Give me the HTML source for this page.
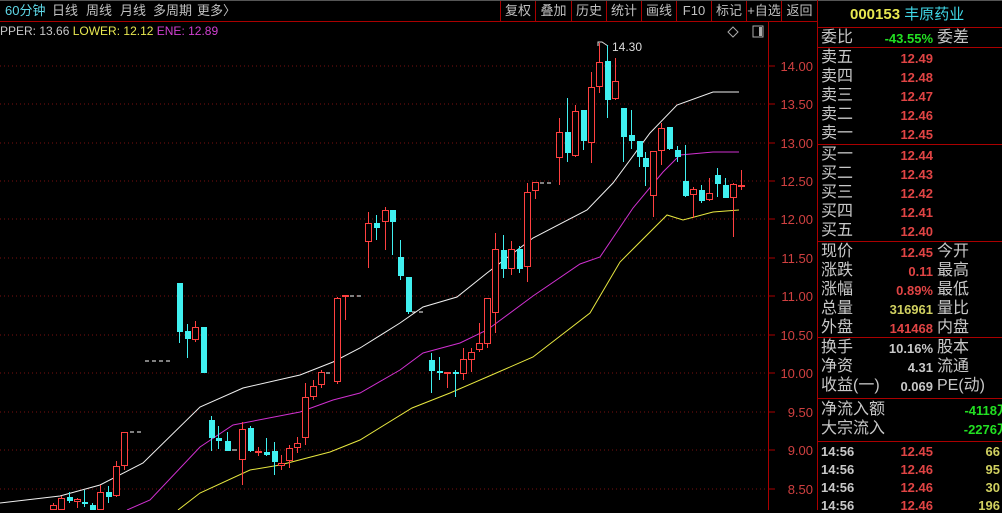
<!DOCTYPE html>
<html><head><meta charset="utf-8"><style>
*{margin:0;padding:0;box-sizing:border-box}
body{width:1002px;height:510px;background:#000;overflow:hidden;position:relative;font-family:"Liberation Sans","WenQuanYi Zen Hei","Noto Sans CJK SC",sans-serif;color:#c8c8c8}
.a{position:absolute;white-space:nowrap;line-height:1}
.tb{font-size:13px;color:#c0c0c0;top:4px}
.btn{position:absolute;top:0;height:21px;border-right:1px solid #a00;font-size:13px;color:#c0c0c0;text-align:center;line-height:21px}
.l{font-size:16px;color:#c8c8c8;left:821px}
.l2{font-size:16px;color:#c8c8c8;left:937px}
.n{font-size:13px;font-weight:bold;text-align:right;width:120px;left:813px}
.r{color:#e04444}.g{color:#22e022}.y{color:#d0d060}.w{color:#c8c8c8}
.hl{position:absolute;left:818px;width:184px;height:1px;background:#a00}
</style></head><body>
<div class="a tb" style="left:5px;color:#5fd8e8">60分钟</div>
<div class="a tb" style="left:52px">日线</div>
<div class="a tb" style="left:86px">周线</div>
<div class="a tb" style="left:120px">月线</div>
<div class="a tb" style="left:153px">多周期</div>
<div class="a tb" style="left:197px">更多〉</div>
<div style="position:absolute;left:500px;top:0;width:1px;height:21px;background:#a00"></div>
<div class="btn" style="left:501px;width:35px">复权</div>
<div class="btn" style="left:536px;width:36px">叠加</div>
<div class="btn" style="left:572px;width:35px">历史</div>
<div class="btn" style="left:607px;width:35px">统计</div>
<div class="btn" style="left:642px;width:35px">画线</div>
<div class="btn" style="left:677px;width:35px">F10</div>
<div class="btn" style="left:712px;width:35px">标记</div>
<div class="btn" style="left:747px;width:35px">+自选</div>
<div class="btn" style="left:782px;width:36px">返回</div>
<div style="position:absolute;left:0;top:21px;width:818px;height:1px;background:#a00"></div>
<div style="position:absolute;left:0;top:0;width:1002px;height:1px;background:#555"></div>
<div class="a" style="left:0;top:25px;font-size:12px"><span class="w">PPER: 13.66 </span><span style="color:#e8e850">LOWER: 12.12 </span><span style="color:#d040d0">ENE: 12.89</span></div>

<svg style="position:absolute;left:0;top:0" width="818" height="510">
<g stroke="#7a1010" stroke-dasharray="1 3">
<line x1="0" y1="66" x2="768" y2="66"/><line x1="0" y1="104" x2="768" y2="104"/><line x1="0" y1="143" x2="768" y2="143"/><line x1="0" y1="181" x2="768" y2="181"/><line x1="0" y1="219" x2="768" y2="219"/><line x1="0" y1="258" x2="768" y2="258"/><line x1="0" y1="296" x2="768" y2="296"/><line x1="0" y1="335" x2="768" y2="335"/><line x1="0" y1="373" x2="768" y2="373"/><line x1="0" y1="412" x2="768" y2="412"/><line x1="0" y1="450" x2="768" y2="450"/><line x1="0" y1="489" x2="768" y2="489"/>
</g>
<line x1="768.5" y1="22" x2="768.5" y2="510" stroke="#a00"/>
<line x1="817.5" y1="0" x2="817.5" y2="510" stroke="#a00"/>
<g stroke="#a00">
<line x1="769" y1="66" x2="775" y2="66"/><line x1="769" y1="104" x2="775" y2="104"/><line x1="769" y1="143" x2="775" y2="143"/><line x1="769" y1="181" x2="775" y2="181"/><line x1="769" y1="219" x2="775" y2="219"/><line x1="769" y1="258" x2="775" y2="258"/><line x1="769" y1="296" x2="775" y2="296"/><line x1="769" y1="335" x2="775" y2="335"/><line x1="769" y1="373" x2="775" y2="373"/><line x1="769" y1="412" x2="775" y2="412"/><line x1="769" y1="450" x2="775" y2="450"/><line x1="769" y1="489" x2="775" y2="489"/>
</g>
<g fill="#d04040" font-size="13" text-anchor="end" font-family="Liberation Sans">
<text x="813" y="71">14.00</text><text x="813" y="109">13.50</text><text x="813" y="148">13.00</text><text x="813" y="186">12.50</text><text x="813" y="224">12.00</text><text x="813" y="263">11.50</text><text x="813" y="301">11.00</text><text x="813" y="340">10.50</text><text x="813" y="378">10.00</text><text x="813" y="417">9.50</text><text x="813" y="455">9.00</text><text x="813" y="494">8.50</text>
</g>
<path d="M733 27l5 5-5 5-5-5z" fill="none" stroke="#aaa"/>
<rect x="753" y="26" width="10" height="11" fill="none" stroke="#aaa"/><rect x="759" y="27" width="3" height="9" fill="#aaa"/>
<polyline fill="none" stroke="#f0f0f0" points="0,503 60,496 100,485 143,463 200,407 243,388 300,375 333,362 360,348 400,323 423,307 457,297 487,273 533,238 587,210 613,183 650,133 677,105 713,92 739,92"/>
<polyline fill="none" stroke="#d030d0" points="127,510 150,500 200,447 233,425 300,412 333,400 360,393 400,370 423,353 460,343 487,330 533,296 580,264 600,257 633,208 663,172 680,155 713,152 739,152"/>
<polyline fill="none" stroke="#e8e840" points="178,510 200,493 250,470 280,465 330,452 360,440 412,408 450,393 487,377 533,357 590,313 620,262 667,215 683,220 713,212 739,210"/>
<g stroke="#fff"><line x1="130" y1="432" x2="142" y2="432" stroke-dasharray="4 3"/><line x1="145" y1="361" x2="173" y2="361" stroke-dasharray="4 3"/><line x1="350" y1="296" x2="362" y2="296" stroke-dasharray="4 3"/><line x1="326" y1="373" x2="330" y2="373"/><line x1="232" y1="450" x2="237" y2="450"/><line x1="412" y1="312" x2="425" y2="312" stroke-dasharray="4 3"/><line x1="540" y1="183" x2="552" y2="183" stroke-dasharray="4 3"/></g>
<text x="612" y="51" fill="#ddd" font-size="12" font-family="Liberation Sans">14.30</text>
<path d="M598 46v-4h4l6 4" fill="none" stroke="#ddd"/>
<g id="c"></g>
</svg>
<script>
var C=[[53,505,510,503,510,1],[61,498,510,496,510,1],[69,497,501,492,503,0],[77,499,502,498,508,1],[84,502,504,490,507,0],[92,505,510,503,510,0],[100,492,510,485,510,1],[108,492,497,486,503,0],[116,466,496,461,497,1],[124,432,466,432,470,1],
[179,283,332,283,343,0],[187,331,339,324,358,0],[195,327,340,321,342,1],[203,327,373,327,373,0],
[211,420,438,416,451,0],[218,438,441,426,449,0],[227,441,451,432,451,0],[242,429,460,422,485,1],[250,428,451,426,452,0],[258,451,453,447,456,1],[266,452,455,438,456,0],[274,451,462,442,475,0],[281,463,466,455,470,1],[289,448,461,445,468,1],[297,443,448,437,453,1],[305,397,438,383,445,1],[313,386,397,380,400,1],[321,372,385,370,388,1],[337,298,382,297,384,1],[345,295,297,295,320,1],
[368,223,242,212,268,1],[376,223,228,215,240,0],[385,210,222,207,250,1],[392,210,222,210,255,0],[400,257,276,240,280,0],[408,277,312,277,314,0],
[431,360,371,353,393,0],[439,371,373,357,380,0],[447,372,374,372,388,1],[455,372,374,370,397,0],[463,359,374,348,380,1],[471,352,360,348,372,1],[479,343,350,323,352,1],[487,298,344,298,348,1],[495,249,313,233,333,1],[503,250,269,235,278,0],[511,249,269,241,275,1],[519,249,269,246,273,0],[527,192,267,183,282,1],[535,182,191,182,199,1],
[559,132,158,118,185,1],[567,132,153,98,162,0],[575,111,156,105,157,1],[583,110,141,110,150,0],[591,87,143,72,163,1],[599,62,87,43,93,1],[607,61,100,45,118,0],[615,81,99,58,100,1],[623,108,137,108,162,0],[631,135,141,110,149,0],[639,141,157,141,167,0],[645,158,167,152,186,0],[653,151,196,151,217,1],[661,128,151,123,165,1],[669,127,149,127,150,0],[677,150,157,146,162,0],[685,181,196,145,197,0],[693,189,195,187,218,1],[701,190,201,185,203,0],[709,193,200,178,201,1],[717,175,184,168,197,0],[725,185,198,178,198,0],[733,184,198,183,237,1],[741,185,187,170,190,1]];
var g=document.getElementById('c'),s='';
C.forEach(function(c){var x=c[0],o=c[1],cl=c[2],h=c[3],l=c[4],col=c[5]?'#ff4040':'#40f0f0';
s+='<line x1="'+(x+.5)+'" y1="'+h+'" x2="'+(x+.5)+'" y2="'+l+'" stroke="'+col+'"/>';
var hh=Math.max(cl-o,1);
if(c[5])s+='<rect x="'+(x-2.5)+'" y="'+(o+.5)+'" width="6" height="'+(hh-1<1?1:hh-1)+'" fill="#000" stroke="'+col+'"/>';
else s+='<rect x="'+(x-2)+'" y="'+o+'" width="6" height="'+hh+'" fill="'+col+'"/>';});
g.innerHTML=s;
</script>

<div class="a" style="left:850px;top:7px;font-size:15px;font-weight:bold;color:#e8e850">000153 <span style="color:#40d8e8;font-weight:normal">丰原药业</span></div>
<div class="hl" style="top:27px"></div>
<div class="a l" style="top:30px">委比</div><div class="a n g" style="top:32px">-43.55%</div><div class="a l2" style="top:30px">委差</div>
<div class="hl" style="top:47px"></div>
<div class="a l" style="top:50px">卖五</div><div class="a n r" style="top:52px">12.49</div>
<div class="a l" style="top:69px">卖四</div><div class="a n r" style="top:71px">12.48</div>
<div class="a l" style="top:88px">卖三</div><div class="a n r" style="top:90px">12.47</div>
<div class="a l" style="top:107px">卖二</div><div class="a n r" style="top:109px">12.46</div>
<div class="a l" style="top:126px">卖一</div><div class="a n r" style="top:128px">12.45</div>
<div class="hl" style="top:144px"></div>
<div class="a l" style="top:147px">买一</div><div class="a n r" style="top:149px">12.44</div>
<div class="a l" style="top:166px">买二</div><div class="a n r" style="top:168px">12.43</div>
<div class="a l" style="top:185px">买三</div><div class="a n r" style="top:187px">12.42</div>
<div class="a l" style="top:204px">买四</div><div class="a n r" style="top:206px">12.41</div>
<div class="a l" style="top:223px">买五</div><div class="a n r" style="top:225px">12.40</div>
<div class="hl" style="top:241px"></div>
<div class="a l" style="top:244px">现价</div><div class="a n r" style="top:246px">12.45</div><div class="a l2" style="top:244px">今开</div>
<div class="a l" style="top:263px">涨跌</div><div class="a n r" style="top:265px">0.11</div><div class="a l2" style="top:263px">最高</div>
<div class="a l" style="top:282px">涨幅</div><div class="a n r" style="top:284px">0.89%</div><div class="a l2" style="top:282px">最低</div>
<div class="a l" style="top:301px">总量</div><div class="a n y" style="top:303px">316961</div><div class="a l2" style="top:301px">量比</div>
<div class="a l" style="top:320px">外盘</div><div class="a n r" style="top:322px">141468</div><div class="a l2" style="top:320px">内盘</div>
<div class="hl" style="top:337px"></div>
<div class="a l" style="top:340px">换手</div><div class="a n w" style="top:342px">10.16%</div><div class="a l2" style="top:340px">股本</div>
<div class="a l" style="top:359px">净资</div><div class="a n w" style="top:361px">4.31</div><div class="a l2" style="top:359px">流通</div>
<div class="a l" style="top:378px">收益(一)</div><div class="a n w" style="top:380px">0.069</div><div class="a l2" style="top:378px">PE(动)</div>
<div class="hl" style="top:398px"></div>
<div class="a l" style="top:402px">净流入额</div><div class="a n g" style="top:404px;left:890px">-4118万</div>
<div class="a l" style="top:421px">大宗流入</div><div class="a n g" style="top:423px;left:890px">-2276万</div>
<div class="hl" style="top:441px"></div>
<div class="a n w" style="top:445px;left:821px;text-align:left;width:60px">14:56</div><div class="a n r" style="top:445px">12.45</div><div class="a n y" style="top:445px;left:880px">66</div>
<div class="a n w" style="top:463px;left:821px;text-align:left;width:60px">14:56</div><div class="a n r" style="top:463px">12.46</div><div class="a n y" style="top:463px;left:880px">95</div>
<div class="a n w" style="top:481px;left:821px;text-align:left;width:60px">14:56</div><div class="a n r" style="top:481px">12.46</div><div class="a n y" style="top:481px;left:880px">30</div>
<div class="a n w" style="top:499px;left:821px;text-align:left;width:60px">14:56</div><div class="a n r" style="top:499px">12.46</div><div class="a n y" style="top:499px;left:880px">196</div>
</body></html>
